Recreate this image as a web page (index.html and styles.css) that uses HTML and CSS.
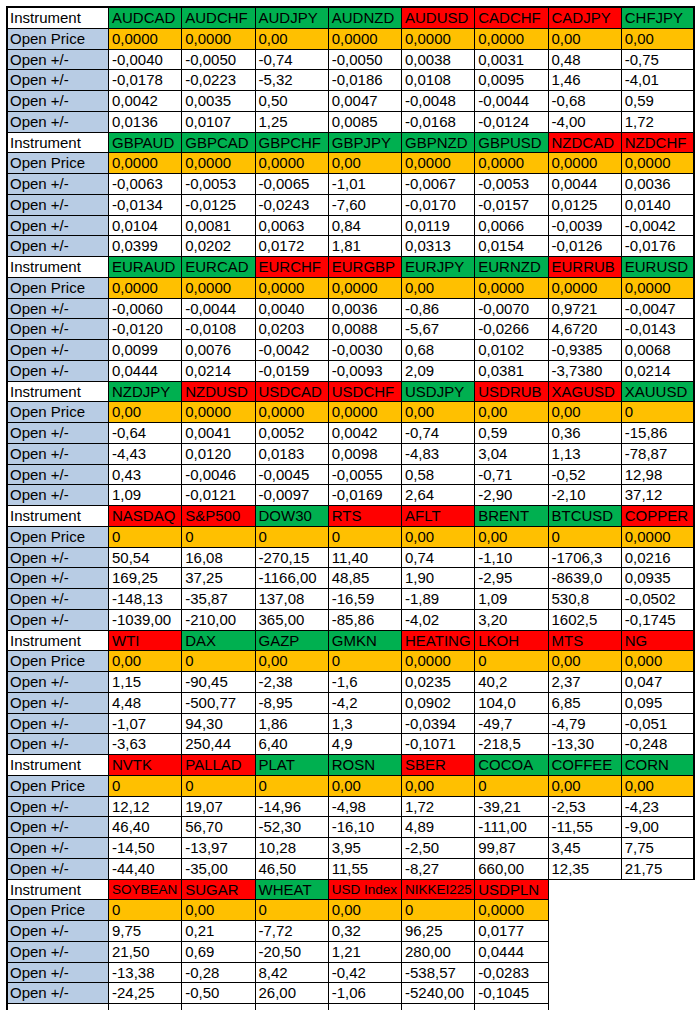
FILE: index.html
```html
<!DOCTYPE html>
<html>
<head>
<meta charset="utf-8">
<link rel="stylesheet" href="styles.css">
</head>
<body>
<div class="sheet">
  <div class="blk">
    <div class="c h">Instrument</div><div class="c g">AUDCAD</div><div class="c g">AUDCHF</div><div class="c g">AUDJPY</div><div class="c g">AUDNZD</div><div class="c r">AUDUSD</div><div class="c r">CADCHF</div><div class="c r">CADJPY</div><div class="c g">CHFJPY</div>
    <div class="c l">Open Price</div><div class="c o">0,0000</div><div class="c o">0,0000</div><div class="c o">0,00</div><div class="c o">0,0000</div><div class="c o">0,0000</div><div class="c o">0,0000</div><div class="c o">0,00</div><div class="c o">0,00</div>
    <div class="c l">Open +/-</div><div class="c">-0,0040</div><div class="c">-0,0050</div><div class="c">-0,74</div><div class="c">-0,0050</div><div class="c">0,0038</div><div class="c">0,0031</div><div class="c">0,48</div><div class="c">-0,75</div>
    <div class="c l">Open +/-</div><div class="c">-0,0178</div><div class="c">-0,0223</div><div class="c">-5,32</div><div class="c">-0,0186</div><div class="c">0,0108</div><div class="c">0,0095</div><div class="c">1,46</div><div class="c">-4,01</div>
    <div class="c l">Open +/-</div><div class="c">0,0042</div><div class="c">0,0035</div><div class="c">0,50</div><div class="c">0,0047</div><div class="c">-0,0048</div><div class="c">-0,0044</div><div class="c">-0,68</div><div class="c">0,59</div>
    <div class="c l">Open +/-</div><div class="c">0,0136</div><div class="c">0,0107</div><div class="c">1,25</div><div class="c">0,0085</div><div class="c">-0,0168</div><div class="c">-0,0124</div><div class="c">-4,00</div><div class="c">1,72</div>
  </div>
  <div class="blk">
    <div class="c h">Instrument</div><div class="c g">GBPAUD</div><div class="c g">GBPCAD</div><div class="c g">GBPCHF</div><div class="c g">GBPJPY</div><div class="c g">GBPNZD</div><div class="c g">GBPUSD</div><div class="c r">NZDCAD</div><div class="c r">NZDCHF</div>
    <div class="c l">Open Price</div><div class="c o">0,0000</div><div class="c o">0,0000</div><div class="c o">0,0000</div><div class="c o">0,00</div><div class="c o">0,0000</div><div class="c o">0,0000</div><div class="c o">0,0000</div><div class="c o">0,0000</div>
    <div class="c l">Open +/-</div><div class="c">-0,0063</div><div class="c">-0,0053</div><div class="c">-0,0065</div><div class="c">-1,01</div><div class="c">-0,0067</div><div class="c">-0,0053</div><div class="c">0,0044</div><div class="c">0,0036</div>
    <div class="c l">Open +/-</div><div class="c">-0,0134</div><div class="c">-0,0125</div><div class="c">-0,0243</div><div class="c">-7,60</div><div class="c">-0,0170</div><div class="c">-0,0157</div><div class="c">0,0125</div><div class="c">0,0140</div>
    <div class="c l">Open +/-</div><div class="c">0,0104</div><div class="c">0,0081</div><div class="c">0,0063</div><div class="c">0,84</div><div class="c">0,0119</div><div class="c">0,0066</div><div class="c">-0,0039</div><div class="c">-0,0042</div>
    <div class="c l">Open +/-</div><div class="c">0,0399</div><div class="c">0,0202</div><div class="c">0,0172</div><div class="c">1,81</div><div class="c">0,0313</div><div class="c">0,0154</div><div class="c">-0,0126</div><div class="c">-0,0176</div>
  </div>
  <div class="blk">
    <div class="c h">Instrument</div><div class="c g">EURAUD</div><div class="c g">EURCAD</div><div class="c r">EURCHF</div><div class="c r">EURGBP</div><div class="c g">EURJPY</div><div class="c g">EURNZD</div><div class="c r">EURRUB</div><div class="c g">EURUSD</div>
    <div class="c l">Open Price</div><div class="c o">0,0000</div><div class="c o">0,0000</div><div class="c o">0,0000</div><div class="c o">0,0000</div><div class="c o">0,00</div><div class="c o">0,0000</div><div class="c o">0,0000</div><div class="c o">0,0000</div>
    <div class="c l">Open +/-</div><div class="c">-0,0060</div><div class="c">-0,0044</div><div class="c">0,0040</div><div class="c">0,0036</div><div class="c">-0,86</div><div class="c">-0,0070</div><div class="c">0,9721</div><div class="c">-0,0047</div>
    <div class="c l">Open +/-</div><div class="c">-0,0120</div><div class="c">-0,0108</div><div class="c">0,0203</div><div class="c">0,0088</div><div class="c">-5,67</div><div class="c">-0,0266</div><div class="c">4,6720</div><div class="c">-0,0143</div>
    <div class="c l">Open +/-</div><div class="c">0,0099</div><div class="c">0,0076</div><div class="c">-0,0042</div><div class="c">-0,0030</div><div class="c">0,68</div><div class="c">0,0102</div><div class="c">-0,9385</div><div class="c">0,0068</div>
    <div class="c l">Open +/-</div><div class="c">0,0444</div><div class="c">0,0214</div><div class="c">-0,0159</div><div class="c">-0,0093</div><div class="c">2,09</div><div class="c">0,0381</div><div class="c">-3,7380</div><div class="c">0,0214</div>
  </div>
  <div class="blk">
    <div class="c h">Instrument</div><div class="c g">NZDJPY</div><div class="c r">NZDUSD</div><div class="c r">USDCAD</div><div class="c r">USDCHF</div><div class="c g">USDJPY</div><div class="c r">USDRUB</div><div class="c r">XAGUSD</div><div class="c g">XAUUSD</div>
    <div class="c l">Open Price</div><div class="c o">0,00</div><div class="c o">0,0000</div><div class="c o">0,0000</div><div class="c o">0,0000</div><div class="c o">0,00</div><div class="c o">0,00</div><div class="c o">0,00</div><div class="c o">0</div>
    <div class="c l">Open +/-</div><div class="c">-0,64</div><div class="c">0,0041</div><div class="c">0,0052</div><div class="c">0,0042</div><div class="c">-0,74</div><div class="c">0,59</div><div class="c">0,36</div><div class="c">-15,86</div>
    <div class="c l">Open +/-</div><div class="c">-4,43</div><div class="c">0,0120</div><div class="c">0,0183</div><div class="c">0,0098</div><div class="c">-4,83</div><div class="c">3,04</div><div class="c">1,13</div><div class="c">-78,87</div>
    <div class="c l">Open +/-</div><div class="c">0,43</div><div class="c">-0,0046</div><div class="c">-0,0045</div><div class="c">-0,0055</div><div class="c">0,58</div><div class="c">-0,71</div><div class="c">-0,52</div><div class="c">12,98</div>
    <div class="c l">Open +/-</div><div class="c">1,09</div><div class="c">-0,0121</div><div class="c">-0,0097</div><div class="c">-0,0169</div><div class="c">2,64</div><div class="c">-2,90</div><div class="c">-2,10</div><div class="c">37,12</div>
  </div>
  <div class="blk">
    <div class="c h">Instrument</div><div class="c r">NASDAQ</div><div class="c r">S&amp;P500</div><div class="c g">DOW30</div><div class="c r">RTS</div><div class="c r">AFLT</div><div class="c g">BRENT</div><div class="c g">BTCUSD</div><div class="c r">COPPER</div>
    <div class="c l">Open Price</div><div class="c o">0</div><div class="c o">0</div><div class="c o">0</div><div class="c o">0</div><div class="c o">0,00</div><div class="c o">0,00</div><div class="c o">0</div><div class="c o">0,0000</div>
    <div class="c l">Open +/-</div><div class="c">50,54</div><div class="c">16,08</div><div class="c">-270,15</div><div class="c">11,40</div><div class="c">0,74</div><div class="c">-1,10</div><div class="c">-1706,3</div><div class="c">0,0216</div>
    <div class="c l">Open +/-</div><div class="c">169,25</div><div class="c">37,25</div><div class="c">-1166,00</div><div class="c">48,85</div><div class="c">1,90</div><div class="c">-2,95</div><div class="c">-8639,0</div><div class="c">0,0935</div>
    <div class="c l">Open +/-</div><div class="c">-148,13</div><div class="c">-35,87</div><div class="c">137,08</div><div class="c">-16,59</div><div class="c">-1,89</div><div class="c">1,09</div><div class="c">530,8</div><div class="c">-0,0502</div>
    <div class="c l">Open +/-</div><div class="c">-1039,00</div><div class="c">-210,00</div><div class="c">365,00</div><div class="c">-85,86</div><div class="c">-4,02</div><div class="c">3,20</div><div class="c">1602,5</div><div class="c">-0,1745</div>
  </div>
  <div class="blk">
    <div class="c h">Instrument</div><div class="c r">WTI</div><div class="c g">DAX</div><div class="c g">GAZP</div><div class="c g">GMKN</div><div class="c r">HEATING</div><div class="c r">LKOH</div><div class="c r">MTS</div><div class="c r">NG</div>
    <div class="c l">Open Price</div><div class="c o">0,00</div><div class="c o">0</div><div class="c o">0,00</div><div class="c o">0</div><div class="c o">0,0000</div><div class="c o">0</div><div class="c o">0,00</div><div class="c o">0,000</div>
    <div class="c l">Open +/-</div><div class="c">1,15</div><div class="c">-90,45</div><div class="c">-2,38</div><div class="c">-1,6</div><div class="c">0,0235</div><div class="c">40,2</div><div class="c">2,37</div><div class="c">0,047</div>
    <div class="c l">Open +/-</div><div class="c">4,48</div><div class="c">-500,77</div><div class="c">-8,95</div><div class="c">-4,2</div><div class="c">0,0902</div><div class="c">104,0</div><div class="c">6,85</div><div class="c">0,095</div>
    <div class="c l">Open +/-</div><div class="c">-1,07</div><div class="c">94,30</div><div class="c">1,86</div><div class="c">1,3</div><div class="c">-0,0394</div><div class="c">-49,7</div><div class="c">-4,79</div><div class="c">-0,051</div>
    <div class="c l">Open +/-</div><div class="c">-3,63</div><div class="c">250,44</div><div class="c">6,40</div><div class="c">4,9</div><div class="c">-0,1071</div><div class="c">-218,5</div><div class="c">-13,30</div><div class="c">-0,248</div>
  </div>
  <div class="blk">
    <div class="c h">Instrument</div><div class="c r">NVTK</div><div class="c r">PALLAD</div><div class="c g">PLAT</div><div class="c g">ROSN</div><div class="c r">SBER</div><div class="c g">COCOA</div><div class="c g">COFFEE</div><div class="c g">CORN</div>
    <div class="c l">Open Price</div><div class="c o">0</div><div class="c o">0</div><div class="c o">0</div><div class="c o">0,00</div><div class="c o">0,00</div><div class="c o">0</div><div class="c o">0,00</div><div class="c o">0,00</div>
    <div class="c l">Open +/-</div><div class="c">12,12</div><div class="c">19,07</div><div class="c">-14,96</div><div class="c">-4,98</div><div class="c">1,72</div><div class="c">-39,21</div><div class="c">-2,53</div><div class="c">-4,23</div>
    <div class="c l">Open +/-</div><div class="c">46,40</div><div class="c">56,70</div><div class="c">-52,30</div><div class="c">-16,10</div><div class="c">4,89</div><div class="c">-111,00</div><div class="c">-11,55</div><div class="c">-9,00</div>
    <div class="c l">Open +/-</div><div class="c">-14,50</div><div class="c">-13,97</div><div class="c">10,28</div><div class="c">3,95</div><div class="c">-2,50</div><div class="c">99,87</div><div class="c">3,45</div><div class="c">7,75</div>
    <div class="c l">Open +/-</div><div class="c">-44,40</div><div class="c">-35,00</div><div class="c">46,50</div><div class="c">11,55</div><div class="c">-8,27</div><div class="c">660,00</div><div class="c">12,35</div><div class="c">21,75</div>
  </div>
  <div class="blk last">
    <div class="c h">Instrument</div><div class="c r s">SOYBEAN</div><div class="c r">SUGAR</div><div class="c g">WHEAT</div><div class="c r s">USD Index</div><div class="c r s">NIKKEI225</div><div class="c r">USDPLN</div>
    <div class="c l">Open Price</div><div class="c o">0</div><div class="c o">0,00</div><div class="c o">0</div><div class="c o">0,00</div><div class="c o">0</div><div class="c o">0,0000</div>
    <div class="c l">Open +/-</div><div class="c">9,75</div><div class="c">0,21</div><div class="c">-7,72</div><div class="c">0,32</div><div class="c">96,25</div><div class="c">0,0177</div>
    <div class="c l">Open +/-</div><div class="c">21,50</div><div class="c">0,69</div><div class="c">-20,50</div><div class="c">1,21</div><div class="c">280,00</div><div class="c">0,0444</div>
    <div class="c l">Open +/-</div><div class="c">-13,38</div><div class="c">-0,28</div><div class="c">8,42</div><div class="c">-0,42</div><div class="c">-538,57</div><div class="c">-0,0283</div>
    <div class="c l">Open +/-</div><div class="c">-24,25</div><div class="c">-0,50</div><div class="c">26,00</div><div class="c">-1,06</div><div class="c">-5240,00</div><div class="c">-0,1045</div>
    <div class="c"></div><div class="c"></div><div class="c"></div><div class="c"></div><div class="c"></div><div class="c"></div><div class="c"></div>
  </div>
</div>
</body>
</html>
```

FILE: styles.css
```css
html, body {
  margin: 0;
  padding: 0;
  overflow: hidden;
  background: #fff;
}

.sheet {
  margin: 6px 0 0 6px;
  border-left: 2px solid #000;
  border-top: 2px solid #000;
  display: flex;
  flex-direction: column;
  width: fit-content;
  font-family: "Liberation Sans", Arial, sans-serif;
  font-size: 15px;
  color: #000;
}

.blk {
  display: grid;
  grid-template-columns: 101px repeat(8, 73.25px);
  grid-auto-rows: 20.75px;
}

.blk.last {
  grid-template-columns: 101px repeat(6, 73.25px);
}

.blk > :nth-child(9n) {
  border-right-width: 2px;
}

.blk.last > :nth-child(9n) {
  border-right-width: 1px;
}

.c {
  box-sizing: border-box;
  border-right: 1px solid #000;
  border-bottom: 1px solid #000;
  padding-left: 2px;
  line-height: 19.75px;
  white-space: nowrap;
  overflow: hidden;
  background: #fff;
}

.h { background: #fff; }
.l { background: #b8cce4; }
.g { background: #00b050; padding-left: 3px; }
.r { background: #ff0000; padding-left: 3px; }
.o { background: #ffc000; padding-left: 3px; }

.blk > .c:not(.h):not(.l) { padding-left: 3px; }

.s {
  font-size: 13.5px;
}
```
